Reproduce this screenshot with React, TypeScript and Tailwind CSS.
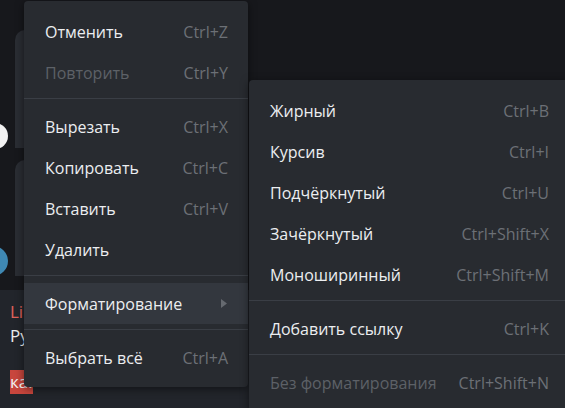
import React from "react";

type Item =
  | { kind: "sep" }
  | {
      kind: "item";
      label: string;
      shortcut?: string;
      disabled?: boolean;
      active?: boolean;
      submenu?: boolean;
    };

const mainItems: Item[] = [
  { kind: "item", label: "Отменить", shortcut: "Ctrl+Z" },
  { kind: "item", label: "Повторить", shortcut: "Ctrl+Y", disabled: true },
  { kind: "sep" },
  { kind: "item", label: "Вырезать", shortcut: "Ctrl+X" },
  { kind: "item", label: "Копировать", shortcut: "Ctrl+C" },
  { kind: "item", label: "Вставить", shortcut: "Ctrl+V" },
  { kind: "item", label: "Удалить" },
  { kind: "sep" },
  { kind: "item", label: "Форматирование", active: true, submenu: true },
  { kind: "sep" },
  { kind: "item", label: "Выбрать всё", shortcut: "Ctrl+A" },
];

const formatItems: Item[] = [
  { kind: "item", label: "Жирный", shortcut: "Ctrl+B" },
  { kind: "item", label: "Курсив", shortcut: "Ctrl+I" },
  { kind: "item", label: "Подчёркнутый", shortcut: "Ctrl+U" },
  { kind: "item", label: "Зачёркнутый", shortcut: "Ctrl+Shift+X" },
  { kind: "item", label: "Моноширинный", shortcut: "Ctrl+Shift+M" },
  { kind: "sep" },
  { kind: "item", label: "Добавить ссылку", shortcut: "Ctrl+K" },
  { kind: "sep" },
  {
    kind: "item",
    label: "Без форматирования",
    shortcut: "Ctrl+Shift+N",
    disabled: true,
  },
];

function MenuRows({ items }: { items: Item[] }) {
  return (
    <>
      {items.map((it, i) =>
        it.kind === "sep" ? (
          <div key={i} className="mt-[5px] mb-[7px] h-px bg-[#3a3e45]" />
        ) : (
          <div
            key={i}
            className={`flex h-[41px] items-center justify-between pl-[21px] pr-[20px] ${
              it.active ? "bg-[#33373e]" : ""
            }`}
          >
            <span
              className={it.disabled ? "text-[#5d6167]" : "text-[#eceef0]"}
            >
              {it.label}
            </span>
            {it.shortcut && (
              <span className="text-[#6c7076]">{it.shortcut}</span>
            )}
            {it.submenu && (
              <svg width="6" height="9" viewBox="0 0 6 9" className="mr-[1px]">
                <path d="M0 0 L6 4.5 L0 9 Z" fill="#666a70" />
              </svg>
            )}
          </div>
        ),
      )}
    </>
  );
}

export default function App() {
  return (
    <div className="relative h-[408px] w-[565px] overflow-hidden bg-[#17181c] font-['Open_Sans',sans-serif] text-[16px] leading-[22px]">
      {/* chat backdrop */}
      <div className="flex h-[290px] flex-col pt-[30px]">
        <div className="flex items-end">
          <div className="relative h-[25px] w-[8px] overflow-hidden">
            <div className="absolute -left-[18px] top-0 h-[26px] w-[26px] rounded-full bg-[#f2f2f2]" />
          </div>
          <div className="ml-[7px] h-[118px] w-[60px] rounded-tl-[10px] bg-[#2a2d33]" />
        </div>
        <div className="mt-[12px] flex items-end">
          <div className="relative h-[30px] w-[8px] overflow-hidden">
            <div className="absolute -left-[22px] top-0 h-[30px] w-[30px] rounded-full bg-[#3f88b3]" />
          </div>
          <div className="ml-[7px] h-[116px] w-[60px] rounded-tl-[10px] bg-[#2a2d33]" />
        </div>
      </div>
      <div className="flex h-[118px] flex-col bg-[#22252b] pl-[10px] pt-[10px] text-[17px] leading-[24px]">
        <span className="text-[#e0625b]">Li</span>
        <span className="text-[#eeeeee]">Ру</span>
        <span className="mt-[22px] w-fit bg-[#c8463d] text-[#f3f3f3]">ка.</span>
      </div>

      {/* main context menu */}
      <div className="absolute left-[24px] top-[1px] w-[224px] rounded-[4px] bg-[#282b30] pt-[10px] pb-[9px] shadow-[0_2px_8px_rgba(0,0,0,0.5)]">
        <MenuRows items={mainItems} />
      </div>

      {/* formatting submenu */}
      <div className="absolute left-[249px] top-[80px] w-[320px] rounded-[4px] bg-[#282b30] pt-[10px] pb-[9px] shadow-[0_2px_8px_rgba(0,0,0,0.5)]">
        <MenuRows items={formatItems} />
      </div>
    </div>
  );
}
